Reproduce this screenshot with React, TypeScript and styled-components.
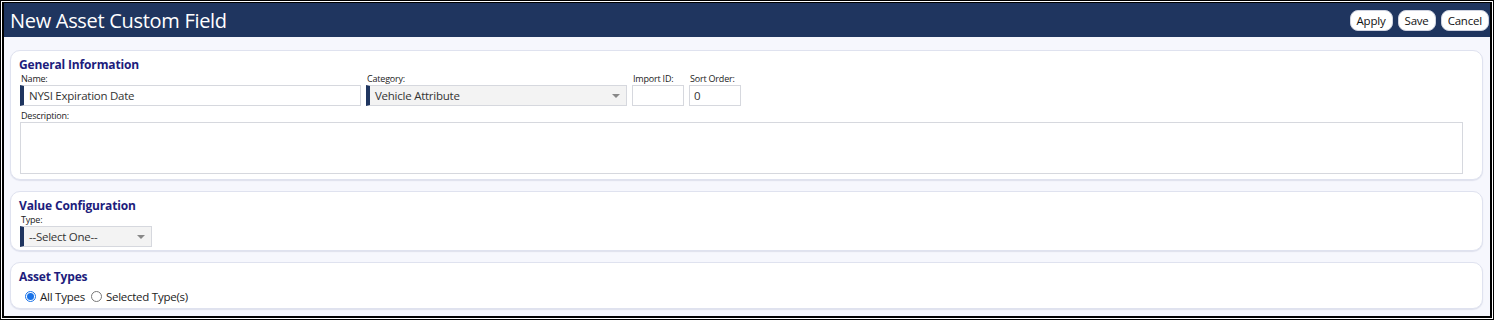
import React from "react";
import styled, { createGlobalStyle } from "styled-components";

const GlobalStyle = createGlobalStyle`
	html, body {
		margin: 0;
		padding: 0;
		background: #ffffff;
	}
	* {
		box-sizing: border-box;
	}
`;

const Frame = styled.div`
	width: 1494px;
	height: 320px;
	border: 1px solid #000;
	padding: 1px;
	background: #fff;
`;

const Window = styled.div`
	height: 100%;
	border: 2px solid #000;
	border-top-width: 1px;
	display: flex;
	flex-direction: column;
	background: #f6f7fd;
	font-family: "Open Sans", "Noto Sans", sans-serif;
	overflow: hidden;
`;

const Header = styled.div`
	height: 34px;
	flex-shrink: 0;
	background: #1f355f;
	display: flex;
	align-items: center;
	justify-content: space-between;
	padding: 0 1px 0 6px;
`;

const Title = styled.h1`
	margin: 0;
	color: #fff;
	font-size: 20px;
	font-weight: 400;
	letter-spacing: -0.3px;
`;

const Actions = styled.div`
	display: flex;
	gap: 5px;
	padding-top: 1px;
`;

const Button = styled.button`
	height: 21px;
	padding: 0 6px;
	border: 1px solid #cfd3e0;
	border-radius: 8px;
	background: #fff;
	color: #111;
	font-family: inherit;
	font-size: 11.5px;
	line-height: 19px;
	letter-spacing: -0.2px;
	cursor: pointer;
`;

const Body = styled.div`
	flex: 1;
	padding: 13px 7px 0 6px;
	display: flex;
	flex-direction: column;
	gap: 11px;
`;

const Panel = styled.section<{ $height: number }>`
	height: ${(p) => p.$height}px;
	background: #fff;
	border: 1px solid #dfe2ef;
	border-radius: 10px;
	box-shadow: 0 1px 1px rgba(180, 186, 210, 0.35);
	padding: 6px 8px 0 9px;
`;

const PanelTitle = styled.h2`
	margin: 0 0 0 -1px;
	font-size: 12px;
	font-weight: 700;
	color: #201c7c;
	line-height: 16px;
	letter-spacing: -0.15px;
`;

const Row = styled.div`
	display: flex;
	gap: 5px;
	align-items: flex-end;
`;

const Field = styled.div<{ $width: number }>`
	width: ${(p) => p.$width}px;
	display: flex;
	flex-direction: column;
`;

const Label = styled.label`
	font-size: 9px;
	line-height: 12px;
	color: #222;
	letter-spacing: -0.2px;
	padding-left: 1px;
`;

const Input = styled.div<{ $marked?: boolean; $grey?: boolean }>`
	position: relative;
	height: 21px;
	border: 1px solid #d6d8de;
	border-left: ${(p) => (p.$marked ? "4px solid #1f355f" : "1px solid #d6d8de")};
	background: ${(p) => (p.$grey ? "#f3f3f3" : "#fff")};
	font-size: 11.5px;
	color: #333;
	line-height: 19px;
	padding-left: ${(p) => (p.$marked ? "5px" : "4px")};
	letter-spacing: -0.25px;
`;

const Caret = styled.span`
	position: absolute;
	right: 6px;
	top: 8px;
	width: 0;
	height: 0;
	border-left: 4px solid transparent;
	border-right: 4px solid transparent;
	border-top: 4px solid #888;
`;

const TextArea = styled.div`
	height: 52px;
	margin-right: 11px;
	border: 1px solid #d6d8de;
	background: #fff;
`;

const Radios = styled.div`
	display: flex;
	align-items: center;
	gap: 6px;
	padding: 4px 0 0 5px;
	font-size: 11.5px;
	color: #222;
`;

const RadioItem = styled.label`
	display: flex;
	align-items: center;
	gap: 4px;
	letter-spacing: -0.25px;
`;

const RadioDot = styled.span<{ $checked?: boolean }>`
	width: 11px;
	height: 11px;
	border-radius: 50%;
	border: 1px solid ${(p) => (p.$checked ? "#1a73e8" : "#777")};
	background: #fff;
	display: inline-flex;
	align-items: center;
	justify-content: center;
	&::after {
		content: "";
		width: 7px;
		height: 7px;
		border-radius: 50%;
		background: ${(p) => (p.$checked ? "#1a73e8" : "transparent")};
	}
`;

export default function App() {
	return (
		<>
			<GlobalStyle />
			<Frame>
				<Window>
					<Header>
						<Title>New Asset Custom Field</Title>
						<Actions>
							<Button>Apply</Button>
							<Button>Save</Button>
							<Button>Cancel</Button>
						</Actions>
					</Header>
					<Body>
						<Panel $height={130}>
							<PanelTitle>General Information</PanelTitle>
							<Row>
								<Field $width={341}>
									<Label>Name:</Label>
									<Input $marked>NYSI Expiration Date</Input>
								</Field>
								<Field $width={261}>
									<Label>Category:</Label>
									<Input $marked $grey>
										Vehicle Attribute
										<Caret />
									</Input>
								</Field>
								<Field $width={52}>
									<Label>Import ID:</Label>
									<Input />
								</Field>
								<Field $width={52}>
									<Label>Sort Order:</Label>
									<Input>0</Input>
								</Field>
							</Row>
							<Field $width={1456} style={{ marginTop: 4 }}>
								<Label>Description:</Label>
							</Field>
							<TextArea />
						</Panel>
						<Panel $height={60}>
							<PanelTitle>Value Configuration</PanelTitle>
							<Field $width={132}>
								<Label>Type:</Label>
								<Input $marked $grey>
									--Select One--
									<Caret />
								</Input>
							</Field>
						</Panel>
						<Panel $height={47}>
							<PanelTitle>Asset Types</PanelTitle>
							<Radios>
								<RadioItem>
									<RadioDot $checked />
									All Types
								</RadioItem>
								<RadioItem>
									<RadioDot />
									Selected Type(s)
								</RadioItem>
							</Radios>
						</Panel>
					</Body>
				</Window>
			</Frame>
		</>
	);
}
